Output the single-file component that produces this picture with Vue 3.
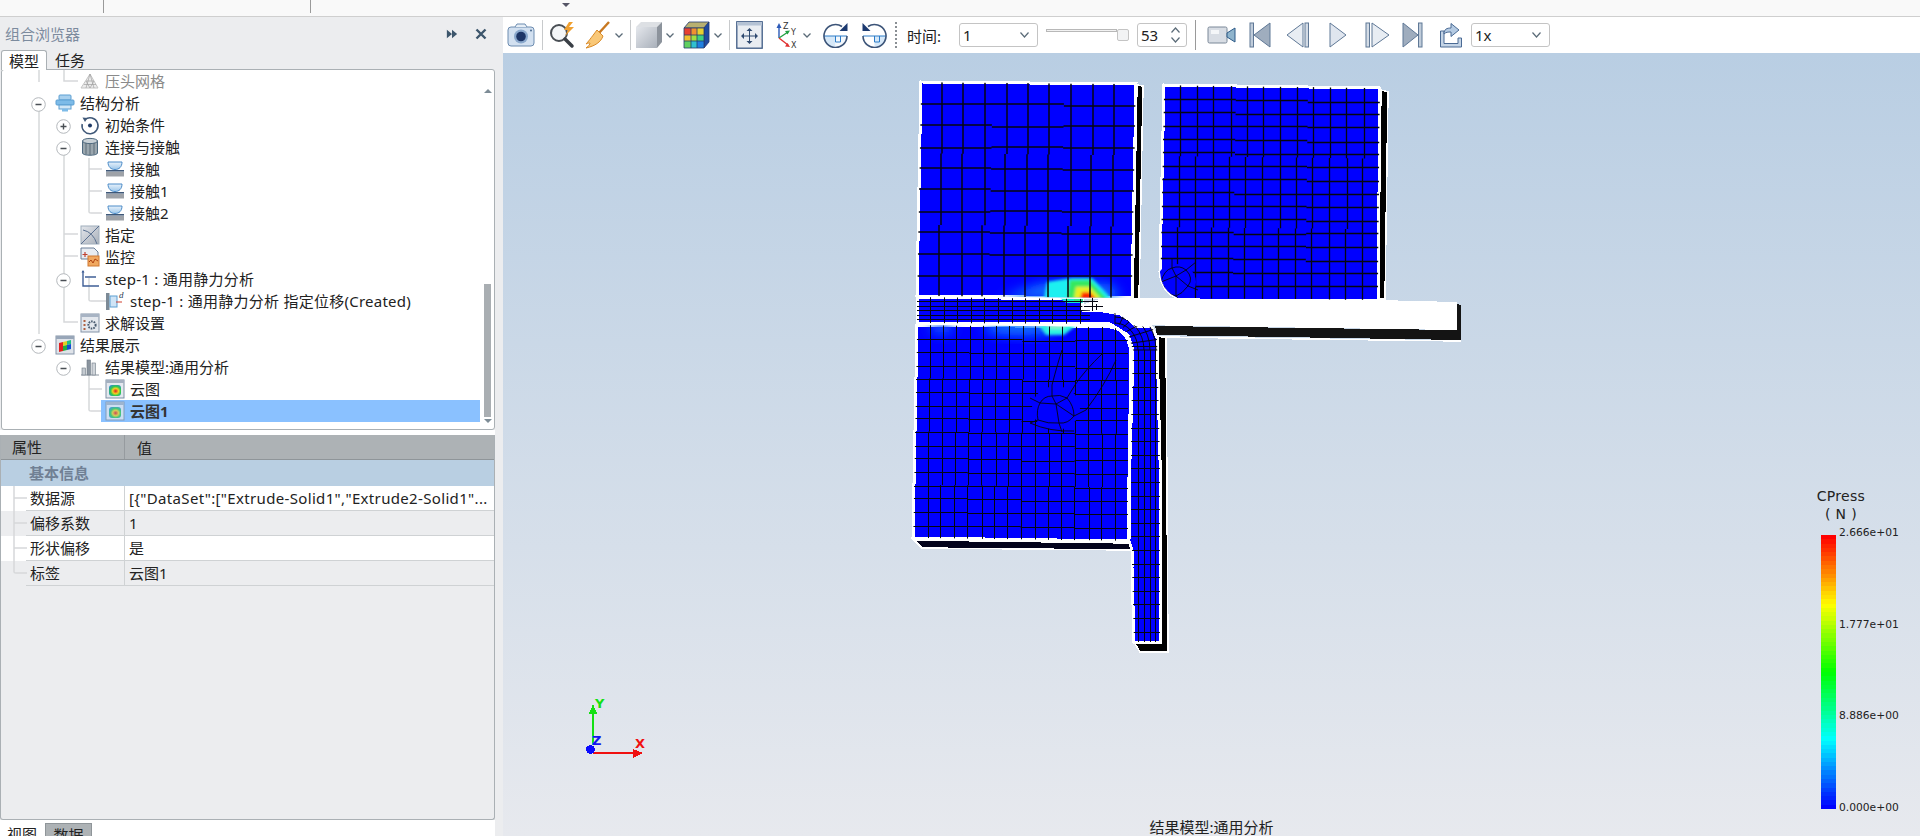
<template>
  <div class="app">
    <svg class="defs" width="0" height="0">
      <defs>
        <linearGradient id="gGrey" x1="0" y1="0" x2="1" y2="1">
          <stop offset="0" stop-color="#e4e7ec" />
          <stop offset="1" stop-color="#a9b0ba" />
        </linearGradient>
        <linearGradient id="gBlue" x1="0" y1="0" x2="0" y2="1">
          <stop offset="0" stop-color="#e8f2fb" />
          <stop offset="1" stop-color="#9cc6ea" />
        </linearGradient>
        <radialGradient id="gHeat" cx="0.55" cy="0.55" r="0.7">
          <stop offset="0" stop-color="#e02020" />
          <stop offset="0.35" stop-color="#f0d020" />
          <stop offset="0.6" stop-color="#30c850" />
          <stop offset="1" stop-color="#2a80e0" />
        </radialGradient>
      </defs>
    </svg>

    <div class="topbar">
      <div class="top-cell first"></div>
      <div class="top-cell second"></div>
      <i class="top-caret"></i>
    </div>

    <div class="main">
      <aside class="side">
        <div class="side-head">
          <span class="side-title">组合浏览器</span>
          <svg class="head-ico" width="12" height="12" viewBox="0 0 14 12"><path d="M1 1l6 5-6 5zM7 1l6 5-6 5z" fill="#3d566c" /></svg>
          <svg class="head-ico close" width="12" height="12" viewBox="0 0 12 12"><path d="M1.5 1.5l9 9M10.5 1.5l-9 9" stroke="#3d566c" stroke-width="2.4" /></svg>
        </div>
        <div class="side-tabs">
          <span class="stab on">模型</span>
          <span class="stab">任务</span>
        </div>

        <div class="tree">
          <svg class="guides" width="480" height="358">
            <path d="M37 0V12M37 32V264M62 0V11H76M62 76V252H76M62 164H76M62 186H76M87 88V142Q87 143 89 143H100M87 99H100M87 121H100M87 208V230Q87 231 89 231H104M87 296V340Q87 341 89 341H100M87 319H100" fill="none" stroke="#d6d8da" stroke-width="1.5" />
          </svg>
          <div class="rows">
            <div v-for="r in rows" :key="r.id" class="row" :class="'lv' + r.lv">
              <span class="exp">
                <svg v-if="r.exp" width="15" height="15" viewBox="0 0 15 15">
                  <circle cx="7.5" cy="7.5" r="6.8" fill="#fff" stroke="#b4b8bc" stroke-width="1" />
                  <path d="M4.5 7.5h6" stroke="#4a4f55" stroke-width="1.4" />
                  <path v-if="r.exp === 'plus'" d="M7.5 4.5v6" stroke="#4a4f55" stroke-width="1.4" />
                </svg>
              </span>
              <div class="cell" :class="{ sel: r.sel, faded: r.faded }">
                <svg class="ti" width="20" height="20" viewBox="0 0 20 20">
                  <template v-if="r.icon === 'mesh'">
                    <path d="M10 3l8 14H1z" fill="#ececec" stroke="#c4c4c4" />
                    <path d="M6 10h8M4 13.5h12M10 3l-4 14M10 3l4 14M6 10l4 7 4-7" stroke="#a0a0a0" stroke-width=".7" fill="none" />
                  </template>
                  <template v-else-if="r.icon === 'struct'">
                    <rect x="4" y="2" width="12" height="5" rx="1" fill="#a8d0ee" stroke="#5c9fd2" />
                    <rect x="1" y="7" width="18" height="5" rx="1" fill="#7dbbe8" stroke="#5c9fd2" />
                    <rect x="4" y="12" width="12" height="4" fill="#d0e6f6" stroke="#5c9fd2" />
                    <rect x="7" y="16" width="6" height="2.5" fill="#7dbbe8" />
                  </template>
                  <template v-else-if="r.icon === 'init'">
                    <path d="M5 4.5A8 8 0 1 1 2.2 9" fill="none" stroke="#3f5878" stroke-width="1.5" />
                    <path d="M2.5 2.5l5 .5-2.5 4z" fill="#3f5878" />
                    <circle cx="10" cy="10.5" r="2" fill="#1f3a66" />
                  </template>
                  <template v-else-if="r.icon === 'cyl'">
                    <path d="M2.5 4v12c0 3 15 3 15 0V4z" fill="#9aa6ae" stroke="#4f6a80" />
                    <ellipse cx="10" cy="4" rx="7.5" ry="2.6" fill="#c8d0d6" stroke="#4f6a80" />
                    <path d="M6 6v11M10 7v11M14 6v11" stroke="#5c6c78" stroke-width="1" />
                  </template>
                  <template v-else-if="r.icon === 'contact'">
                    <path d="M3 3h14c0 5-3 7.500-7 7.500S3 8 3 3z" fill="url(#gBlue)" stroke="#4c8cc8" />
                    <rect x="1" y="11" width="18" height="1.600" fill="#3f5878" />
                    <rect x="1" y="13" width="18" height="4.500" fill="#9ea2a8" />
                  </template>
                  <template v-else-if="r.icon === 'assign'">
                    <rect x="1" y="1" width="18" height="18" fill="url(#gGrey)" stroke="#a0aebc" />
                    <path d="M1 19L19 1M3 5q10 2 14 14" stroke="#5a7090" fill="none" stroke-width="1" />
                  </template>
                  <template v-else-if="r.icon === 'monitor'">
                    <path d="M1 1h13l4 4v7H1z" fill="#e8ecf2" stroke="#6a7f98" />
                    <path d="M5 5v5M2.500 7.500h5" stroke="#c04030" stroke-width="1.200" />
                    <rect x="8" y="9" width="11" height="10" fill="#f0a860" stroke="#d07830" />
                    <path d="M9 15l2-2 2 3 2-4 3 2" stroke="#b04010" fill="none" />
                  </template>
                  <template v-else-if="r.icon === 'step'">
                    <path d="M3 2v15h16" fill="none" stroke="#3f5f96" stroke-width="1.400" />
                    <path d="M5 8h11" stroke="#3f5f96" stroke-width="1.400" />
                    <path d="M1.500 3.500L3 1l1.500 2.500z" fill="#3f5f96" />
                  </template>
                  <template v-else-if="r.icon === 'disp'">
                    <rect x="1" y="2" width="3.500" height="17" fill="#7c8a96" />
                    <rect x="5" y="5" width="7" height="11" fill="#cfe4f6" stroke="#5c9fd2" />
                    <path d="M11 11h6" stroke="#d04030" stroke-width="1.200" />
                    <text x="14" y="7" class="d-mark">d</text>
                  </template>
                  <template v-else-if="r.icon === 'solve'">
                    <rect x="1" y="1" width="18" height="18" fill="#e4e8ee" stroke="#8494a8" />
                    <rect x="1" y="1" width="18" height="3" fill="#a8b4c4" />
                    <circle cx="12" cy="12" r="3.600" fill="none" stroke="#4a5c70" stroke-width="2" stroke-dasharray="1.600 1" />
                    <path d="M3.500 7h2v2h-2zM3.500 11h2v2h-2zM3.500 15h2v2h-2z" fill="#b06040" />
                  </template>
                  <template v-else-if="r.icon === 'result'">
                    <rect x="1" y="1" width="18" height="18" fill="#dfe3e9" stroke="#8494a8" />
                    <rect x="1" y="1" width="18" height="3" fill="#98a6b8" />
                    <path d="M4 8l4-1v9l-4 1z" fill="#e02020" />
                    <path d="M8 7l4-1v4l-4 1z" fill="#e0d020" />
                    <path d="M8 11l4-1v5l-4 1z" fill="#20b040" />
                    <path d="M12 6l4-1v4l-4 1z" fill="#20c080" />
                    <path d="M12 10l4-1v5l-4 1z" fill="#1050d0" />
                  </template>
                  <template v-else-if="r.icon === 'bars'">
                    <path d="M1 18h18" stroke="#8a949e" />
                    <rect x="2" y="11" width="3.500" height="7" fill="#c4cad0" stroke="#6f7a86" stroke-width=".6" />
                    <rect x="7" y="3" width="3.500" height="15" fill="#8a949e" stroke="#6f7a86" stroke-width=".6" />
                    <rect x="12" y="6" width="3.500" height="12" fill="#d0d5da" stroke="#6f7a86" stroke-width=".6" />
                  </template>
                  <template v-else>
                    <rect x="1" y="1" width="18" height="18" fill="#e4e8ee" stroke="#7e90a6" />
                    <rect x="1" y="1" width="18" height="3" fill="#a4b0c0" />
                    <rect x="4" y="6" width="12" height="11" rx="3" fill="url(#gHeat)" />
                  </template>
                </svg>
                <span class="tx" :class="{ wide: r.wide }">{{ r.label }}</span>
              </div>
            </div>
          </div>
          <div class="scroll">
            <i class="arr up"></i>
            <div class="thumb"></div>
            <i class="arr down"></i>
          </div>
        </div>

        <div class="gap"></div>

        <div class="props">
          <div class="p-head">
            <span class="p-k">属性</span>
            <span class="p-v">值</span>
          </div>
          <div class="p-sec">基本信息</div>
          <div class="p-list">
            <svg class="p-guides" width="26" height="100">
              <path d="M13 0V86Q13 87 15 87H26M13 12H26M13 37H26M13 62H26" fill="none" stroke="#d6d8da" stroke-width="1.500" />
            </svg>
            <div v-for="(p, i) in props" :key="p.k" class="p-row" :class="{ alt: i % 2 === 1 }">
              <span class="p-name">{{ p.k }}</span>
              <span class="p-val" :class="{ wide: i === 0 }">{{ p.v }}</span>
            </div>
          </div>
        </div>

        <div class="bot-tabs">
          <span class="btab">视图</span>
          <span class="btab on">数据</span>
        </div>
      </aside>

      <section class="right">
        <div class="toolbar">
          <svg class="i-cam" width="28" height="24" viewBox="0 0 28 24">
            <rect x="1" y="4" width="26" height="19" rx="3" fill="#d2e0f0" stroke="#6c8cb0" />
            <path d="M8 4l2-3h8l2 3" fill="#e6eef6" stroke="#6c8cb0" />
            <circle cx="14" cy="13.500" r="7" fill="#8aa8cc" />
            <circle cx="14" cy="13.500" r="4.800" fill="#1d3566" />
            <circle cx="24" cy="7.500" r="1" fill="#4a6a90" />
          </svg>
          <i class="sep s1"></i>
          <svg class="i-mag" width="29" height="28" viewBox="0 0 29 28">
            <circle cx="11" cy="12" r="8" fill="#f4f6f8" stroke="#4a4f55" stroke-width="2" />
            <path d="M17 18l7 7" stroke="#3a3f46" stroke-width="3.500" stroke-linecap="round" />
            <path d="M21 1l-5 8h4l-3 6 9-9h-5l4-5z" fill="#f0a030" />
          </svg>
          <svg class="i-broom" width="25" height="28" viewBox="0 0 25 28">
            <path d="M24 1L14 12" stroke="#c87820" stroke-width="2.400" />
            <path d="M12 9l6 6c-2 6-8 10-17 12 3-2 4-4 4-5-1 0-2 0-4 1 2-2 5-6 11-14z" fill="#f9c878" stroke="#d88a28" />
          </svg>
          <svg class="chev c1" width="8" height="5" viewBox="0 0 8 5"><path d="M.5.500L4 4 7.500.500" fill="none" stroke="#5b6b78" stroke-width="1.300" /></svg>
          <i class="sep s2"></i>
          <svg class="i-cube" width="28" height="28" viewBox="0 0 28 28">
            <path d="M1 6h21v21H1z" fill="url(#gGrey)" />
            <path d="M1 6l5-5h21l-5 5z" fill="#dde0e4" />
            <path d="M22 6l5-5v20l-5 6z" fill="#8c939c" />
          </svg>
          <svg class="chev c2" width="8" height="5" viewBox="0 0 8 5"><path d="M.5.500L4 4 7.500.500" fill="none" stroke="#5b6b78" stroke-width="1.300" /></svg>
          <svg class="i-rubik" width="27" height="28" viewBox="0 0 27 28">
            <path d="M1 7l5-6h20l-5 6z" fill="#b8b070" stroke="#243a70" stroke-width=".8" />
            <path d="M21 7l5-6v20l-5 6z" fill="#1f4aa0" stroke="#243a70" stroke-width=".8" />
            <rect x="1" y="7" width="7" height="7" fill="#e84030" />
            <rect x="8" y="7" width="6" height="7" fill="#f09030" />
            <rect x="14" y="7" width="7" height="7" fill="#e8d030" />
            <rect x="1" y="14" width="7" height="6" fill="#f0c030" />
            <rect x="8" y="14" width="6" height="6" fill="#a0e040" />
            <rect x="14" y="14" width="7" height="6" fill="#40d080" />
            <rect x="1" y="20" width="7" height="7" fill="#60d060" />
            <rect x="8" y="20" width="6" height="7" fill="#30c0d0" />
            <rect x="14" y="20" width="7" height="7" fill="#2080e0" />
            <path d="M1 7h20v20H1zM8 7v20M14 7v20M1 14h20M1 20h20" fill="none" stroke="#243a70" stroke-width=".8" />
          </svg>
          <svg class="chev c3" width="8" height="5" viewBox="0 0 8 5"><path d="M.5.500L4 4 7.500.500" fill="none" stroke="#5b6b78" stroke-width="1.300" /></svg>
          <i class="sep s3"></i>
          <svg class="i-fit" width="27" height="28" viewBox="0 0 27 28">
            <rect x=".8" y=".8" width="25.400" height="26.400" fill="#e9edf2" stroke="#3d5a84" stroke-width="1.300" />
            <rect x="1" y="1" width="25" height="3.500" fill="#b4c2d4" />
            <path d="M13.500 8v14M7 15h13" stroke="#2f4a70" />
            <path d="M13.500 7l-3 3h6zM13.500 23l-3-3h6zM5 15l3-3v6zM22 15l-3-3v6z" fill="#2f4a70" />
          </svg>
          <svg class="i-axes" width="23" height="28" viewBox="0 0 23 28">
            <path d="M4 17V5" stroke="#2c5ab8" stroke-width="1.400" />
            <path d="M4 2L1.500 7h5z" fill="#2c5ab8" />
            <path d="M4 17l9-6" stroke="#20a040" stroke-width="1.400" />
            <path d="M15 9.500l-5 .5 2.500 3.500z" fill="#20a040" />
            <path d="M4 17l9 7" stroke="#e03030" stroke-width="1.400" />
            <path d="M15 26l-5-.5 2.500-3.500z" fill="#e03030" />
            <text x="8" y="8" class="ax-t">Z</text>
            <text x="16" y="14" class="ax-t">Y</text>
            <text x="16" y="27" class="ax-t">X</text>
          </svg>
          <svg class="chev c4" width="8" height="5" viewBox="0 0 8 5"><path d="M.5.500L4 4 7.500.500" fill="none" stroke="#5b6b78" stroke-width="1.300" /></svg>
          <svg class="i-rot r1" width="25" height="26" viewBox="0 0 25 26">
            <path d="M.5 14a12 12 0 0 0 12 12v-12z" fill="#d6e8f8" />
            <path d="M12.500 14h12a12 12 0 0 1-12 12z" fill="#f4f8fc" />
            <path d="M1 14h23M12.500 14v6h5v-6" fill="none" stroke="#2c7cc8" />
            <path d="M19 4.500A11.500 11.500 0 1 0 24 14" fill="none" stroke="#3c5478" stroke-width="1.600" />
            <path d="M24.500 1v8h-8z" fill="#1c3a70" />
          </svg>
          <svg class="i-rot r2" width="25" height="26" viewBox="0 0 25 26">
            <path d="M24.500 14a12 12 0 0 1-12 12v-12z" fill="#d6e8f8" />
            <path d="M1 14h23M12.500 14v6h5v-6" fill="none" stroke="#2c7cc8" />
            <path d="M6 4.500A11.500 11.500 0 1 1 1 14" fill="none" stroke="#3c5478" stroke-width="1.600" />
            <path d="M.5 1v8h8z" fill="#1c3a70" />
          </svg>
          <i class="dots"></i>
          <span class="t-label">时间:</span>
          <div class="combo c-time">
            <span>1</span>
            <svg class="chev" width="9" height="6" viewBox="0 0 9 6"><path d="M.5.500L4.500 5 8.500.500" fill="none" stroke="#5b6b78" stroke-width="1.200" /></svg>
          </div>
          <div class="slider">
            <div class="track"></div>
            <div class="knob"></div>
          </div>
          <div class="spin">
            <span>53</span>
            <div class="spin-btns">
              <svg width="9" height="6" viewBox="0 0 9 6"><path d="M.5 5.500L4.500 1 8.500 5.500" fill="none" stroke="#5b6b78" stroke-width="1.200" /></svg>
              <svg width="9" height="6" viewBox="0 0 9 6"><path d="M.5.500L4.500 5 8.500.500" fill="none" stroke="#5b6b78" stroke-width="1.200" /></svg>
            </div>
          </div>
          <i class="sep s4"></i>
          <svg class="i-video" width="30" height="20" viewBox="0 0 30 20">
            <rect x="1" y="2" width="19" height="16" rx="1.500" fill="#d8dde4" stroke="#7a8898" />
            <rect x="4" y="5" width="8" height="4" fill="#f4f6f8" />
            <path d="M20 8l8-5v14l-8-5z" fill="#8fb4cc" stroke="#2c5a88" />
          </svg>
          <svg class="i-first" width="22" height="26" viewBox="0 0 22 26">
            <rect x="1" y="1" width="3.500" height="24" fill="#c0ccda" stroke="#5f7896" />
            <path d="M21 1v24L5 13z" fill="#9fadbe" stroke="#5f7896" />
          </svg>
          <svg class="i-prev" width="24" height="26" viewBox="0 0 24 26">
            <rect x="19" y="1" width="3.500" height="24" fill="#d4dce6" stroke="#5f7896" />
            <path d="M17 1v24L1 13z" fill="#e8edf3" stroke="#5f7896" />
          </svg>
          <svg class="i-play" width="18" height="26" viewBox="0 0 18 26">
            <path d="M1 1v24l16-12z" fill="#dfe5ee" stroke="#5f7896" />
          </svg>
          <svg class="i-next" width="25" height="26" viewBox="0 0 25 26">
            <rect x="1" y="1" width="3.500" height="24" fill="#d4dce6" stroke="#5f7896" />
            <path d="M7 1v24l17-12z" fill="#e8edf3" stroke="#5f7896" />
          </svg>
          <svg class="i-last" width="21" height="26" viewBox="0 0 21 26">
            <path d="M1 1v24l15-12z" fill="#9fadbe" stroke="#5f7896" />
            <rect x="16.500" y="1" width="3.500" height="24" fill="#c0ccda" stroke="#5f7896" />
          </svg>
          <svg class="i-export" width="24" height="26" viewBox="0 0 24 26">
            <path d="M1.500 9v16h21V16h-3.500v5.500H5V9z" fill="#c4d4e6" stroke="#4a6a94" />
            <path d="M5 12c0-5 3-6 7-6V1.500L20 8l-8 6.500V10c-3 0-5 0-7 2z" fill="#b4cae2" stroke="#4a6a94" />
          </svg>
          <div class="combo c-rate">
            <span>1x</span>
            <svg class="chev" width="9" height="6" viewBox="0 0 9 6"><path d="M.5.500L4.500 5 8.500.500" fill="none" stroke="#5b6b78" stroke-width="1.200" /></svg>
          </div>
        </div>

        <div class="view">
          <!-- model is drawn in page coordinates -->
          <svg class="canvas" viewBox="503 53 1417 783">
            <defs>
              <clipPath id="cTL"><polygon :points="tlPts" /></clipPath>
              <clipPath id="cTR"><path :d="trPath" /></clipPath>
              <clipPath id="cLow"><path :d="lowPath" /></clipPath>
              <clipPath id="cBand"><polygon :points="bandPts" /></clipPath>
              <filter id="b1" x="-30%" y="-30%" width="160%" height="160%"><feGaussianBlur stdDeviation="1.600" /></filter>
              <filter id="b2" x="-30%" y="-60%" width="160%" height="220%"><feGaussianBlur stdDeviation="6" /></filter>
            </defs>

            <g class="crisp">
              <!-- shadows behind the parts -->
              <polygon points="1137,85 1143,86 1139,299 1133,299" fill="#000" stroke="#fff" stroke-width="1.500" />
              <polygon points="1381,90 1388,92 1385,299 1378,299" fill="#000" stroke="#fff" stroke-width="1.500" />
              <polygon points="914,540 1130,543 1134,548 1132,550 922,548" fill="#03031c" stroke="#fff" stroke-width="1.500" />
              <polygon points="1158,336 1166,338 1168,652 1140,652 1134,642 1158,642" fill="#000" stroke="#fff" stroke-width="1.500" />

              <polygon :points="tlPts" fill="#0000ff" stroke="#fff" stroke-width="3" />
              <path :d="trPath" fill="#0000ff" stroke="#fff" stroke-width="3" />
              <path :d="lowPath" fill="#0000ff" stroke="#fff" stroke-width="3" />
              <polygon :points="bandPts" fill="#0000ff" stroke="#fff" stroke-width="3" />
            </g>

            <!-- contact pressure spots -->
            <g clip-path="url(#cTL)">
              <g filter="url(#b2)">
                <polygon points="1000,298 1040,284 1110,284 1122,298" fill="#0a78ff" />
              </g>
              <g filter="url(#b1)">
                <polygon points="1047,282 1072,278 1092,278 1112,299 1044,299" fill="#1ef0f0" />
                <polygon points="1070,280 1090,280 1107,299 1067,299" fill="#34e860" />
                <polygon points="1076,287 1090,287 1101,299 1074,299" fill="#e8f020" />
                <polygon points="1082,292 1090,292 1096,299 1080,299" fill="#ff2800" />
              </g>
            </g>
            <g clip-path="url(#cLow)">
              <g filter="url(#b2)">
                <ellipse cx="1020" cy="328" rx="36" ry="7" fill="#0a7cff" />
                <ellipse cx="942" cy="328" rx="12" ry="6" fill="#0a58ff" />
              </g>
              <g filter="url(#b1)">
                <polygon points="1038,324 1078,324 1064,335 1046,335" fill="#2cf4e0" />
                <polygon points="1046,324 1070,324 1062,329 1050,329" fill="#88f4c8" />
              </g>
            </g>
            <g clip-path="url(#cBand)">
              <polygon points="1060,298 1084,298 1084,303 1066,303" fill="#10e8d0" />
              <rect x="1074" y="299" width="10" height="2" fill="#30e880" />
            </g>

            <!-- mesh -->
            <g fill="none" stroke="#060610">
              <path :d="meshTL" clip-path="url(#cTL)" stroke-width="1.500" />
              <path :d="meshTR" clip-path="url(#cTR)" stroke-width="1.300" />
              <path :d="meshLow" clip-path="url(#cLow)" stroke-width="1" />
              <path :d="meshBand" clip-path="url(#cBand)" stroke-width="1" />
            </g>
            <g clip-path="url(#cLow)">
              <ellipse cx="1056" cy="408" rx="24" ry="22" fill="#0000ff" />
              <path :d="fanLow" fill="none" stroke="#060610" stroke-width=".9" />
            </g>
            <g clip-path="url(#cTR)">
              <ellipse cx="1176" cy="282" rx="20" ry="18" fill="#0000ff" />
              <path :d="fanTR" fill="none" stroke="#060610" stroke-width=".9" />
            </g>

            <!-- pressed plate -->
            <g class="crisp">
              <polygon points="1155,326 1457,330 1457,304 1461,305 1461,340 1157,335" fill="#141414" />
              <path d="M1161 337L1461 341" stroke="#fff" stroke-width="1.500" />
              <polygon points="1102,298 1140,298 1378,300 1457,302 1457,330 1133,325 1120,314 1103,311 1083,310 1084,304" fill="#fff" />
              <path d="M1083 301H1098M1084 306H1103M1092 298V311M1096 304V310" stroke="#060610" stroke-width="1" fill="none" />
            </g>

            <!-- triad -->
            <g class="crisp">
              <path d="M593 745V712" stroke="#14e014" stroke-width="1.500" />
              <path d="M593 704l4 9.500h-8z" fill="#14e014" />
              <path d="M593 753H642" stroke="#f01010" stroke-width="1.500" />
              <path d="M643 753l-10-4v9z" fill="#f01010" />
              <circle cx="590.500" cy="749.500" r="4.500" fill="#0a0aff" />
            </g>
            <text x="595" y="708" class="axis green">Y</text>
            <text x="592" y="745" class="axis blue">Z</text>
            <text x="635" y="748" class="axis red">X</text>
          </svg>

          <div class="legend">
            <div class="lg-title">CPress<br />( N )</div>
            <div class="lg-body">
              <div class="lg-bar">
                <i v-for="c in bands" :key="c" :style="{ background: c }"></i>
              </div>
              <div class="lg-labels">
                <span>2.666e+01</span>
                <span>1.777e+01</span>
                <span>8.886e+00</span>
                <span>0.000e+00</span>
              </div>
            </div>
          </div>

          <div class="caption">结果模型:通用分析</div>
        </div>
      </section>
    </div>
  </div>
</template>

<script setup>
const rows = [
  { label: '压头网格', lv: 1, icon: 'mesh', faded: true },
  { label: '结构分析', lv: 0, exp: 'minus', icon: 'struct' },
  { label: '初始条件', lv: 1, exp: 'plus', icon: 'init' },
  { label: '连接与接触', lv: 1, exp: 'minus', icon: 'cyl' },
  { label: '接触', lv: 2, icon: 'contact' },
  { label: '接触1', lv: 2, icon: 'contact' },
  { label: '接触2', lv: 2, icon: 'contact' },
  { label: '指定', lv: 1, icon: 'assign' },
  { label: '监控', lv: 1, icon: 'monitor' },
  { label: 'step-1 : 通用静力分析', lv: 1, exp: 'minus', icon: 'step', wide: true },
  { label: 'step-1 : 通用静力分析 指定位移(Created)', lv: 2, icon: 'disp', wide: true },
  { label: '求解设置', lv: 1, icon: 'solve' },
  { label: '结果展示', lv: 0, exp: 'minus', icon: 'result' },
  { label: '结果模型:通用分析', lv: 1, exp: 'minus', icon: 'bars' },
  { label: '云图', lv: 2, icon: 'cloud' },
  { label: '云图1', lv: 2, icon: 'cloud', sel: true }
].map((r, id) => ({ ...r, id }))

const props = [
  { k: '数据源', v: '[{"DataSet":["Extrude-Solid1","Extrude2-Solid1"...' },
  { k: '偏移系数', v: '1' },
  { k: '形状偏移', v: '是' },
  { k: '标签', v: '云图1' }
]

const bands = Array.from({ length: 64 }, (_, i) => `hsl(${Math.round((i / 63) * 240)},100%,50%)`)

const lerp = (a, b, t) => a + (b - a) * t
const at = (q, u, v) => [
  lerp(lerp(q[0][0], q[1][0], u), lerp(q[3][0], q[2][0], u), v),
  lerp(lerp(q[0][1], q[1][1], u), lerp(q[3][1], q[2][1], u), v)
]

function grid(q, nu, nv, segs, off) {
  let d = ''
  for (let i = 1; i < nv; i++) {
    for (let k = 0; k < segs; k++) {
      const a = at(q, k / segs, i / nv)
      const b = at(q, (k + 1) / segs, i / nv)
      const y = Math.round((a[1] + b[1]) / 2) + ((i + k) % 3 === 0 ? 1 : 0) + off
      d += `M${a[0].toFixed(1)} ${y}H${b[0].toFixed(1)}`
    }
  }
  for (let i = 1; i < nu; i++) {
    for (let k = 0; k < segs; k++) {
      const a = at(q, i / nu, k / segs)
      const b = at(q, i / nu, (k + 1) / segs)
      const x = Math.round((a[0] + b[0]) / 2) + ((i + k) % 4 === 0 ? 1 : 0) + off
      d += `M${x} ${a[1].toFixed(1)}V${b[1].toFixed(1)}`
    }
  }
  return d
}

const tlPts = '921,82 1136,84 1132,298 917,296'
const trPath = 'M1164 85L1380 88L1378 300H1186Q1162 296 1160 272Z'
const lowPath = 'M917 325L1110 327Q1128 329 1131 352L1128 541L913 538Z'
const bandPts =
  '917,297 1083,299 1082,310 1103,311 1120,314 1133,322 1135,326 1152,327 1157,338 1160,460 1160,642 1134,642 1132,567 1132,550 1129,541 1130,460 1133,350 1128,335 1110,324 917,323'

const meshTL = grid([[921, 82], [1136, 84], [1132, 298], [917, 296]], 10, 10, 3, 0)
const meshTR = grid([[1164, 85], [1380, 88], [1378, 300], [1160, 298]], 13, 16, 3, 0.5)
const meshLow = grid([[917, 325], [1128, 327], [1128, 541], [913, 538]], 16, 16, 4, 0.5)

function bandMesh() {
  let d = ''
  for (const y of [301, 306, 310, 315, 319]) d += `M917 ${y + 0.5}H1090`
  for (let x = 930; x < 1085; x += 13.6) d += `M${Math.round(x) + 0.5} 297V324`
  // corner of the sheet
  const cx = 1115
  const cy = 350
  for (let a = -90; a <= 0; a += 15) {
    const r = (a * Math.PI) / 180
    d += `M${cx + 16 * Math.cos(r)} ${cy + 26 * Math.sin(r)}L${cx + 50 * Math.cos(r)} ${cy + 44 * Math.sin(r)}`
  }
  for (const r of [23, 29, 35, 41]) {
    d += `M${cx} ${cy - r - 4}A${r} ${r + 4} 0 0 1 ${cx + r} ${cy}`
  }
  for (const x of [1138, 1144, 1150, 1155]) d += `M${x + 0.5} 350V642`
  for (let y = 346; y < 640; y += 13.6) d += `M1131 ${Math.round(y) + 0.5}H1162`
  return d
}
const meshBand = bandMesh()

const fanLow =
  'M1056 404L1040 403M1056 404L1052 396M1056 404L1067 398M1056 404L1074 416M1056 404L1059 423M1040 403Q1044 396 1052 396Q1060 394 1067 398Q1074 406 1074 416Q1068 424 1059 423Q1048 424 1038 420Q1036 410 1040 403' +
  'M1038 420L1030 423M1059 423L1062 432M1074 416L1086 410M1067 398L1075 385M1052 396L1052 385M1040 403L1030 398' +
  'M1075 385Q1085 370 1103 353M1086 410Q1105 385 1116 360M1052 385Q1058 362 1062 350M1030 423Q1050 432 1074 431'
const fanTR =
  'M1176 276L1161 282M1176 276L1172 268M1176 276L1186 270M1176 276L1188 286M1176 276L1176 296' +
  'M1161 282Q1164 270 1172 268Q1180 265 1186 270Q1194 278 1188 286Q1182 294 1176 296Q1166 294 1161 282' +
  'M1172 268V258M1186 270L1196 262M1188 286L1198 290M1176 296L1180 300M1161 282L1172 300'
</script>

<style>
html,
body {
  margin: 0;
  background: #fff;
  overflow: hidden;
}
</style>

<style scoped>
.app {
  width: 1920px;
  height: 836px;
  display: flex;
  flex-direction: column;
  overflow: hidden;
  font-family: 'Noto Sans', 'Noto Sans CJK SC', sans-serif;
  font-size: 15px;
  color: #222;
}
.defs {
  position: absolute;
}

.topbar {
  height: 16px;
  flex: none;
  background: #f9f9f9;
  border-bottom: 1px solid #cfcfcf;
  display: flex;
}
.top-cell {
  height: 13px;
  border-right: 1px solid #9a9a9a;
}
.top-cell.first {
  width: 103px;
}
.top-cell.second {
  width: 206px;
}
.top-caret {
  margin: 3px 0 0 251px;
  border: 4px solid transparent;
  border-top: 4px solid #556;
  border-bottom: 0;
  width: 0;
  height: 0;
}

.main {
  flex: 1;
  display: flex;
  min-height: 0;
}

.side {
  width: 503px;
  flex: none;
  background: #ecedef;
  display: flex;
  flex-direction: column;
}
.side-head {
  height: 33px;
  margin-right: 8px;
  display: flex;
  align-items: center;
  padding-left: 5px;
}
.side-title {
  color: #7c8b9e;
  flex: 1;
}
.head-ico {
  margin-right: 17px;
}
.head-ico.close {
  margin-right: 8px;
}
.side-tabs {
  height: 19px;
  display: flex;
  padding-left: 1px;
  position: relative;
  z-index: 1;
}
.stab {
  height: 20px;
  line-height: 20px;
  padding: 0 7px;
  margin-right: 1px;
  box-sizing: border-box;
  white-space: nowrap;
}
.stab.on {
  width: 46px;
  background: #fff;
  border: 1px solid #aab0b4;
  border-bottom: 0;
  border-radius: 3px 3px 0 0;
}

.tree {
  height: 361px;
  width: 494px;
  margin-left: 1px;
  flex: none;
  box-sizing: border-box;
  background: #fff;
  border: 1px solid #aab0b4;
  border-radius: 3px;
  display: flex;
  position: relative;
  overflow: hidden;
}
.guides {
  position: absolute;
  left: 0;
  top: 0;
}
.rows {
  width: 478px;
  flex: none;
  position: relative;
}
.row {
  height: 22px;
  display: flex;
  align-items: center;
}
.lv0 {
  padding-left: 29px;
}
.lv1 {
  padding-left: 54px;
}
.lv2 {
  padding-left: 79px;
}
.exp {
  width: 15px;
  height: 15px;
  flex: none;
}
.cell {
  flex: 1;
  height: 22px;
  display: flex;
  align-items: center;
  margin-left: 5px;
  padding-left: 4px;
  min-width: 0;
}
.cell.sel {
  background: #8ac1ff;
  font-weight: 700;
  color: #333;
}
.cell.sel .ti {
  opacity: 0.75;
}
.cell.faded {
  color: #8a8a8a;
}
.ti {
  flex: none;
}
.tx {
  margin-left: 5px;
  white-space: nowrap;
  line-height: 22px;
}
.tx.wide {
  letter-spacing: 0.25px;
}
.d-mark {
  font: italic 9px 'Liberation Serif', serif;
  fill: #2c3a50;
}
.scroll {
  flex: 1;
  display: flex;
  flex-direction: column;
  align-items: center;
  padding-left: 1px;
}
.arr {
  width: 0;
  height: 0;
  border: 4px solid transparent;
}
.arr.up {
  margin-top: 19px;
  border-top: 0;
  border-bottom: 4px solid #7d8c96;
}
.thumb {
  width: 7px;
  height: 133px;
  margin-top: 191px;
  background: #a9aeb2;
}
.arr.down {
  margin-top: 2px;
  border-bottom: 0;
  border-top: 4px solid #7d8c96;
}

.gap {
  height: 5px;
  margin-right: 8px;
  background: #fff;
  flex: none;
}

.props {
  height: 385px;
  margin-right: 8px;
  flex: none;
  box-sizing: border-box;
  background: #ecedef;
  border: 1px solid #aab0b4;
  border-top: 0;
  border-radius: 0 0 3px 3px;
}
.p-head {
  height: 25px;
  background: #adb2b5;
  border-bottom: 1px solid #8f9599;
  display: flex;
  align-items: center;
  box-sizing: border-box;
}
.p-k {
  width: 124px;
  padding-left: 11px;
  box-sizing: border-box;
  border-right: 1px solid #969b9f;
  line-height: 24px;
}
.p-v {
  padding-left: 12px;
}
.p-sec {
  height: 26px;
  line-height: 26px;
  background: #b9cfe2;
  padding-left: 28px;
  font-weight: 700;
  color: #708094;
}
.p-list {
  position: relative;
}
.p-guides {
  position: absolute;
  left: 0;
  top: 0;
}
.p-row {
  height: 25px;
  display: flex;
  background: #fff;
  padding-left: 25px;
  box-sizing: border-box;
  line-height: 24px;
}
.p-row.alt {
  background: #ecedef;
}
.p-name {
  width: 99px;
  padding-left: 4px;
  box-sizing: border-box;
  border-bottom: 1px solid #cfd2d4;
  border-right: 1px solid #cfd2d4;
  flex: none;
}
.p-val {
  flex: 1;
  padding-left: 4px;
  border-bottom: 1px solid #cfd2d4;
  white-space: nowrap;
  overflow: hidden;
}
.p-val.wide {
  letter-spacing: 0.34px;
}

.bot-tabs {
  flex: 1;
  margin-right: 8px;
  background: #fff;
  display: flex;
  padding: 3px 0 0 7px;
  overflow: hidden;
}
.btab {
  width: 38px;
  line-height: 22px;
}
.btab.on {
  width: 47px;
  height: 30px;
  box-sizing: border-box;
  background: #adb2b5;
  border: 1px solid #8f9599;
  text-align: center;
}

.right {
  flex: 1;
  min-width: 0;
  display: flex;
  flex-direction: column;
}
.toolbar {
  height: 36px;
  flex: none;
  background: #fff;
  display: flex;
  align-items: center;
}
.toolbar > * {
  flex: none;
}
.sep {
  width: 1px;
  height: 30px;
  background: #c8cacc;
}
.s1 {
  margin-left: 7px;
}
.s2 {
  margin-left: 7px;
}
.s3 {
  margin-left: 7px;
}
.s4 {
  margin-left: 8px;
  background: #9a9a9a;
}
.i-cam {
  margin-left: 4px;
}
.i-mag {
  margin-left: 5px;
}
.i-broom {
  margin-left: 8px;
}
.c1 {
  margin-left: 5px;
}
.i-cube {
  margin-left: 4px;
}
.c2 {
  margin-left: 3px;
}
.i-rubik {
  margin-left: 9px;
}
.c3 {
  margin-left: 4px;
}
.i-fit {
  margin-left: 6px;
}
.i-axes {
  margin-left: 12px;
}
.c4 {
  margin-left: 5px;
}
.r1 {
  margin-left: 12px;
}
.r2 {
  margin-left: 14px;
}
.dots {
  margin-left: 8px;
  width: 2px;
  height: 26px;
  background: repeating-linear-gradient(#8a8f94 0 2px, transparent 2px 4px);
}
.t-label {
  margin-left: 10px;
  width: 34px;
  white-space: nowrap;
}
.combo {
  height: 24px;
  box-sizing: border-box;
  border: 1px solid #c4c4c4;
  border-radius: 3px;
  display: flex;
  align-items: center;
  justify-content: space-between;
  padding: 0 8px 0 3px;
  background: #fff;
}
.c-time {
  width: 79px;
  margin-left: 18px;
}
.c-rate {
  width: 79px;
  margin-left: 8px;
}
.slider {
  width: 83px;
  height: 12px;
  margin: 0 0 0 8px;
  display: flex;
  align-items: flex-start;
}
.track {
  width: 71px;
  height: 3px;
  box-sizing: border-box;
  background: #f2f2f2;
  border: 1px solid #b8b8b8;
}
.knob {
  width: 12px;
  height: 12px;
  box-sizing: border-box;
  background: #f2f3f4;
  border: 1px solid #c4c4c4;
  border-radius: 2px;
}
.spin {
  width: 50px;
  height: 24px;
  margin-left: 8px;
  box-sizing: border-box;
  border: 1px solid #c4c4c4;
  border-radius: 3px;
  display: flex;
  align-items: center;
  justify-content: space-between;
  padding: 0 6px 0 3px;
}
.spin-btns {
  display: flex;
  flex-direction: column;
  gap: 4px;
}
.spin-btns svg {
  display: block;
}
.i-video {
  margin-left: 11px;
}
.i-first {
  margin-left: 12px;
}
.i-prev {
  margin-left: 15px;
}
.i-play {
  margin-left: 19px;
}
.i-next {
  margin-left: 18px;
}
.i-last {
  margin-left: 12px;
}
.i-export {
  margin-left: 16px;
}
.ax-t {
  font: 8px 'DejaVu Sans', sans-serif;
  fill: #333;
}

.view {
  flex: 1;
  position: relative;
  min-height: 0;
  background: linear-gradient(#b9cee3, #e7e9ee);
}
.canvas {
  position: absolute;
  inset: 0;
  width: 100%;
  height: 100%;
  display: block;
}
.crisp {
  shape-rendering: crispEdges;
}
.axis {
  font: 700 13px 'DejaVu Sans', sans-serif;
}
.green {
  fill: #14e014;
}
.blue {
  fill: #1414f0;
}
.red {
  fill: #f01010;
}

.legend {
  position: absolute;
  left: 1312px;
  top: 434px;
  font-family: 'DejaVu Sans', sans-serif;
  color: #222;
}
.lg-title {
  width: 52px;
  text-align: center;
  font-size: 14px;
  line-height: 18px;
  letter-spacing: 0.3px;
}
.lg-body {
  display: flex;
  align-items: flex-start;
  margin: 12px 0 0 6px;
}
.lg-bar {
  width: 15px;
  height: 274px;
  display: flex;
  flex-direction: column;
}
.lg-bar i {
  flex: 1;
}
.lg-labels {
  height: 289px;
  margin: -9px 0 0 3px;
  display: flex;
  flex-direction: column;
  justify-content: space-between;
  font-size: 10.7px;
  line-height: 14px;
  white-space: nowrap;
}
.caption {
  position: absolute;
  left: 0;
  right: 0;
  bottom: 0;
  text-align: center;
  line-height: 18px;
}
</style>
